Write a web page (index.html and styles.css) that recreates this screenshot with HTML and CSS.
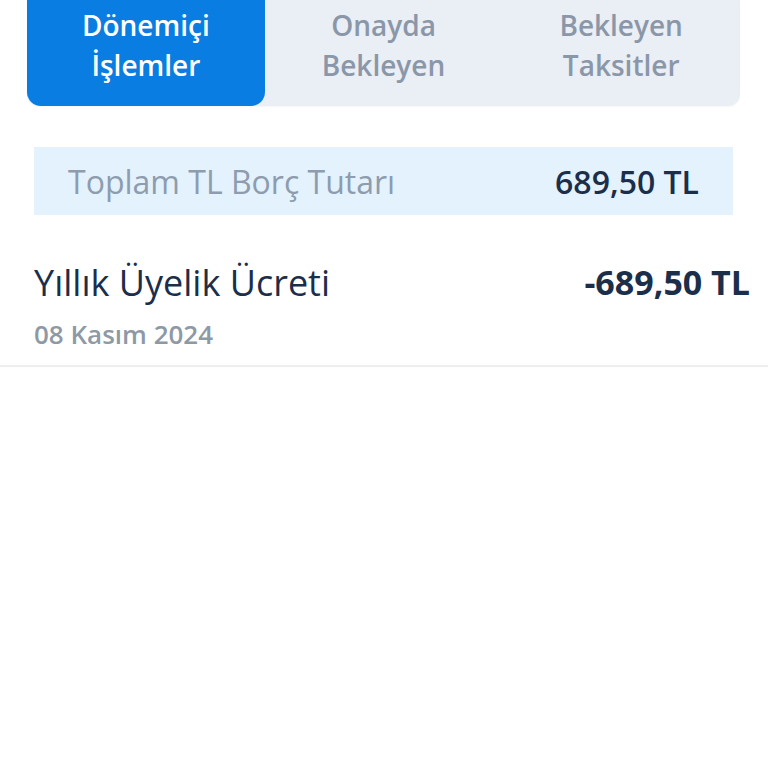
FILE: index.html
```html
<!DOCTYPE html>
<html lang="tr">
<head>
    <meta charset="UTF-8">
    <meta name="viewport" content="width=device-width, initial-scale=1.0">
    <title>Dönemiçi İşlemler</title>
    <link rel="stylesheet" href="styles.css">
</head>
<body>
    <div class="tabs">
        <div class="tab active">Dönemiçi<br>İşlemler</div>
        <div class="tab">Onayda<br>Bekleyen</div>
        <div class="tab">Bekleyen<br>Taksitler</div>
    </div>

    <div class="summary">
        <span class="summary-label">Toplam TL Borç Tutarı</span>
        <span class="summary-value">689,50 TL</span>
    </div>

    <div class="transaction">
        <div class="transaction-top">
            <span class="transaction-name">Yıllık Üyelik Ücreti</span>
            <span class="transaction-amount">-689,50 TL</span>
        </div>
        <div class="transaction-date">08 Kasım 2024</div>
    </div>
</body>
</html>
```

FILE: styles.css
```css
* {
    margin: 0;
    padding: 0;
    box-sizing: border-box;
    font-family: "Open Sans", Arial, sans-serif;
}

body {
    background: white;
    width: 768px;
    height: 768px;
    overflow: hidden;
}

.tabs {
    display: flex;
    margin: 0 28px 0 27px;
    height: 106px;
    background: #eaeef5;
    border-radius: 0 0 12px 12px;
    box-shadow: 0 1px 2px rgba(0, 0, 0, 0.04);
}

.tab {
    flex: 1;
    text-align: center;
    font-size: 28px;
    font-weight: 600;
    line-height: 40px;
    padding-top: 5px;
    color: #8a97a8;
}

.tab.active {
    background: #0a7de2;
    color: white;
    border-radius: 0 0 14px 14px;
}

.summary {
    display: flex;
    justify-content: space-between;
    align-items: center;
    margin: 41px 35px 0 34px;
    height: 68px;
    padding: 0 34px;
    background: #e4f2fd;
}

.summary-label {
    font-size: 32px;
    font-weight: 400;
    color: #8d9cae;
}

.summary-value {
    font-size: 32px;
    font-weight: 600;
    color: #1b2e4a;
}

.transaction {
    padding: 43px 18px 13px 34px;
    border-bottom: 2px solid #eeeeee;
}

.transaction-top {
    display: flex;
    justify-content: space-between;
    align-items: center;
    line-height: 49px;
}

.transaction-name {
    font-size: 36px;
    font-weight: 500;
    color: #1b2e4a;
}

.transaction-amount {
    font-size: 34px;
    font-weight: 700;
    color: #1b2e4a;
}

.transaction-date {
    margin-top: 10px;
    font-size: 26px;
    line-height: 35px;
    font-weight: 600;
    color: #8e99a6;
}
```
